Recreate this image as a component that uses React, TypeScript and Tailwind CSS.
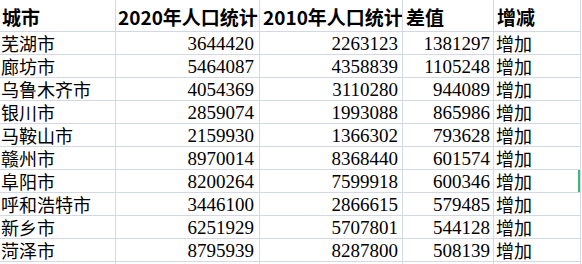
import React from "react";

const rows: [string, string, string, string, string][] = [
  ["芜湖市", "3644420", "2263123", "1381297", "增加"],
  ["廊坊市", "5464087", "4358839", "1105248", "增加"],
  ["乌鲁木齐市", "4054369", "3110280", "944089", "增加"],
  ["银川市", "2859074", "1993088", "865986", "增加"],
  ["马鞍山市", "2159930", "1366302", "793628", "增加"],
  ["赣州市", "8970014", "8368440", "601574", "增加"],
  ["阜阳市", "8200264", "7599918", "600346", "增加"],
  ["呼和浩特市", "3446100", "2866615", "579485", "增加"],
  ["新乡市", "6251929", "5707801", "544128", "增加"],
  ["菏泽市", "8795939", "8287800", "508139", "增加"],
];

const cjk = "font-['Noto_Sans_CJK_SC',sans-serif]";
const num = "font-['Liberation_Serif','Noto_Sans_CJK_SC',serif]";
const cell = "border-r border-b border-[#d3d8e6] flex items-center overflow-hidden whitespace-nowrap leading-none";

export default function App() {
  return (
    <div className="w-[582px] h-[264px] bg-white overflow-hidden text-black">
      <div className="grid grid-cols-[116px_144px_143px_91px_87px]">
        <div className={`${cell} h-[32px] pl-[2px] ${cjk} font-bold text-[19px] pt-[1px]`}>城市</div>
        <div className={`${cell} h-[32px] pl-[2px] ${cjk} font-bold text-[19px] pt-[1px]`}>2020年人口统计</div>
        <div className={`${cell} h-[32px] pl-[3px] ${cjk} font-bold text-[19px] pt-[1px]`}>2010年人口统计</div>
        <div className={`${cell} h-[32px] pl-[3px] ${cjk} font-bold text-[19px] pt-[1px]`}>差值</div>
        <div className={`${cell} h-[32px] pl-[3px] ${cjk} font-bold text-[19px] pt-[1px]`}>增减</div>
        {rows.map((r, i) => (
          <React.Fragment key={i}>
            <div className={`${cell} h-[23px] pl-[1px] ${cjk} text-[18px]`}>{r[0]}</div>
            <div className={`${cell} h-[23px] justify-end pr-[5px] ${num} text-[19px]`}>{r[1]}</div>
            <div className={`${cell} h-[23px] justify-end pr-[4px] ${num} text-[19px]`}>{r[2]}</div>
            <div className={`${cell} h-[23px] justify-end pr-[3px] ${num} text-[19px]`}>{r[3]}</div>
            <div className={`${cell} h-[23px] pl-[2px] ${cjk} text-[18px] relative`}>
              {r[4]}
              {i === 6 && <div className="absolute right-0 top-[-1px] h-[24px] w-[2px] bg-[#3cb878]" />}
            </div>
          </React.Fragment>
        ))}
        <div className={`${cell} h-[23px]`} />
        <div className={`${cell} h-[23px]`} />
        <div className={`${cell} h-[23px]`} />
        <div className={`${cell} h-[23px]`} />
        <div className={`${cell} h-[23px]`} />
      </div>
    </div>
  );
}
